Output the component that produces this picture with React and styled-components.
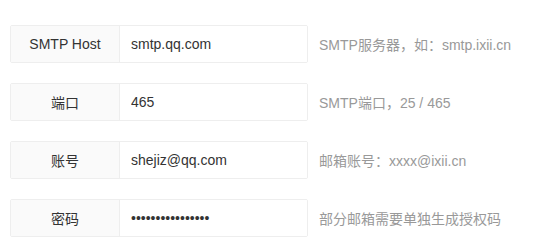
import React from 'react'
import styled, { createGlobalStyle } from 'styled-components'

const GlobalStyle = createGlobalStyle`
   body {
      margin: 0;
      background: #fff;
      font-family: "Liberation Sans", Arial, "Noto Sans CJK SC", sans-serif;
      font-size: 14px;
      color: #333;
   }
`

const Form = styled.div`
   padding: 25px 0 0 10px;
   display: flex;
   flex-direction: column;
   gap: 20px;
`

const Row = styled.div`
   display: flex;
   align-items: center;
`

const Group = styled.div`
   display: flex;
   width: 298px;
   height: 38px;
   box-sizing: border-box;
   border: 1px solid #eee;
   border-radius: 2px;
   overflow: hidden;
`

const Label = styled.label`
   width: 108px;
   flex: none;
   display: flex;
   align-items: center;
   justify-content: center;
   background: #fafafa;
   border-right: 1px solid #eee;
   color: #333;
`

const Input = styled.input`
   flex: 1;
   min-width: 0;
   border: 0;
   outline: none;
   padding: 0 0 0 11px;
   font: inherit;
   color: #333;
   background: #fff;
`

const Hint = styled.div`
   margin-left: 11px;
   color: #999;
   white-space: nowrap;
`

const fields = [
   { id: 'host', label: 'SMTP Host', value: 'smtp.qq.com', hint: 'SMTP服务器，如：smtp.ixii.cn' },
   { id: 'port', label: '端口', value: '465', hint: 'SMTP端口，25 / 465' },
   { id: 'user', label: '账号', value: 'shejiz@qq.com', hint: '邮箱账号：xxxx@ixii.cn' },
   { id: 'pass', label: '密码', value: '1234567890123456', hint: '部分邮箱需要单独生成授权码', type: 'password' },
]

function App() {
   return (
      <>
         <GlobalStyle />
         <Form>
            {fields.map((f) => (
               <Row key={f.id}>
                  <Group>
                     <Label htmlFor={f.id}>{f.label}</Label>
                     <Input id={f.id} type={f.type || 'text'} defaultValue={f.value} />
                  </Group>
                  <Hint>{f.hint}</Hint>
               </Row>
            ))}
         </Form>
      </>
   )
}

export default App
